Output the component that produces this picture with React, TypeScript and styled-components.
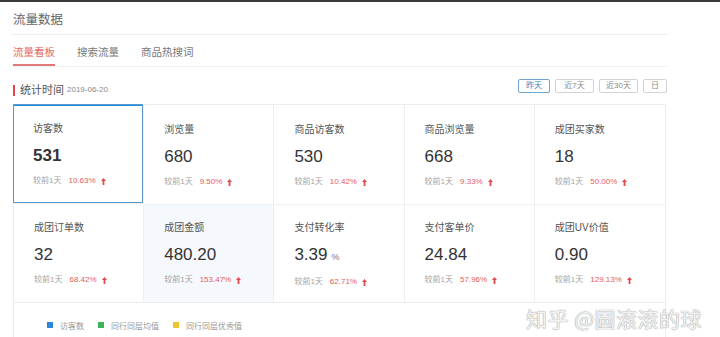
import React from "react";
import styled, { createGlobalStyle } from "styled-components";

const Global = createGlobalStyle`
  html, body { margin: 0; padding: 0; background: #fff; }
  body { font-family: "Liberation Sans", "Noto Sans CJK SC", sans-serif; color: #333; }
  * { box-sizing: border-box; }
`;

const Page = styled.div`
  position: relative;
  width: 720px;
  height: 337px;
  overflow: hidden;
  background: #fff;
`;

const TopBar = styled.div`
  height: 2px;
  background: #3b3b3b;
`;

const Main = styled.div`
  width: 667px;
  padding-left: 12px;
`;

const Header = styled.div`
  height: 33px;
  display: flex;
  align-items: center;
  padding-left: 1px;
  border-bottom: 1px solid #ececec;
  font-size: 12.5px;
  color: #666;
`;

const Tabs = styled.div`
  display: flex;
  gap: 22px;
  padding-left: 1px;
  border-bottom: 1px solid #f0f0f0;
`;

const Tab = styled.div<{ $active?: boolean }>`
  padding: 10px 0 5px;
  line-height: 14px;
  font-size: 10.5px;
  color: ${(p) => (p.$active ? "#e26a6a" : "#777")};
  border-bottom: 2px solid ${(p) => (p.$active ? "#e07a7a" : "transparent")};
`;

const StatHead = styled.div`
  height: 37px;
  display: flex;
  justify-content: space-between;
  align-items: flex-start;
  padding-top: 12px;
`;

const StatTitle = styled.div`
  margin-top: 4px;
  display: flex;
  align-items: center;
  line-height: 14px;
  padding-left: 1px;
`;

const RedMark = styled.span`
  width: 2px;
  height: 11px;
  background: #e04848;
  margin-right: 5px;
`;

const StatLabel = styled.span`
  font-size: 11px;
  color: #555;
`;

const StatDate = styled.span`
  font-size: 8px;
  color: #888;
  margin-left: 3px;
`;

const Ranges = styled.div`
  display: flex;
  gap: 5px;
`;

const RangeBtn = styled.div<{ $active?: boolean; $w: number }>`
  width: ${(p) => p.$w}px;
  height: 14px;
  border: 1px solid ${(p) => (p.$active ? "#6ea4cf" : "#d3d3d3")};
  border-radius: 2px;
  font-size: 8px;
  line-height: 12px;
  text-align: center;
  color: ${(p) => (p.$active ? "#3d7fb8" : "#888")};
  background: #fff;
`;

const Board = styled.div`
  margin-left: 1px;
  width: 653px;
  border: 1px solid #ececec;
  border-bottom: none;
`;

const Grid = styled.div`
  display: grid;
  grid-template-columns: repeat(5, 1fr);
  border-bottom: 1px solid #ececec;
`;

const Cell = styled.div<{ $active?: boolean; $tint?: boolean; $last?: boolean; $bottom?: boolean }>`
  height: ${(p) => (p.$bottom ? 97 : 100)}px;
  padding: ${(p) => (p.$bottom ? "16px" : "18px")} 20px 0;
  border-right: ${(p) => (p.$last ? "none" : "1px solid #efefef")};
  border-bottom: ${(p) => (p.$bottom ? "none" : "1px solid #efefef")};
  background: ${(p) => (p.$tint ? "#f5f9fd" : "#fff")};
  box-shadow: ${(p) =>
    p.$active ? "inset 0 0 0 1px #5c98c8, inset 0 2px 0 #1a8fe3" : "none"};
  margin: ${(p) => (p.$active ? "-1px 0 0 -1px" : "0")};
`;

const Label = styled.div`
  font-size: 10px;
  line-height: 14px;
  color: #555;
`;

const Value = styled.div<{ $bold?: boolean }>`
  margin-top: 8px;
  font-size: 17px;
  line-height: 24px;
  font-weight: ${(p) => (p.$bold ? 700 : 400)};
  color: #333;
`;

const Unit = styled.span`
  font-size: 9px;
  margin-left: 4px;
  color: #777;
`;

const Compare = styled.div`
  margin-top: 7px;
  display: flex;
  align-items: center;
  line-height: 12px;
  font-size: 8px;
`;

const CmpLabel = styled.span`
  color: #a3a3a3;
`;

const CmpPct = styled.span`
  color: #e45b5b;
  margin-left: 7px;
`;

const ArrowIcon = styled.svg`
  margin-left: 5px;
  width: 5px;
  height: 7px;
`;

const Legend = styled.div`
  height: 40px;
  display: flex;
  align-items: center;
  padding: 4px 0 0 33px;
  gap: 14px;
`;

const LegendItem = styled.div`
  display: flex;
  align-items: center;
  font-size: 8px;
  color: #999;
`;

const Swatch = styled.span<{ $c: string }>`
  width: 6px;
  height: 6px;
  background: ${(p) => p.$c};
  margin-right: 7px;
`;

const Watermark = styled.div`
  position: absolute;
  left: 526px;
  top: 303px;
  font-family: "Noto Sans CJK SC", sans-serif;
  font-size: 21px;
  line-height: 30px;
  color: #f2f2f2;
  text-shadow: 0 0 1px #a0a0a0, 0 0 1px #a0a0a0;
  letter-spacing: 0.5px;
  white-space: nowrap;
`;

const Arrow = () => (
  <ArrowIcon viewBox="0 0 5 7">
    <polygon points="2.5,0 5,3 0,3" fill="#e04a4a" />
    <rect x="1.6" y="3" width="1.8" height="4" fill="#e04a4a" />
  </ArrowIcon>
);

type Stat = { label: string; value: string; pct: string; unit?: string };

const row1: Stat[] = [
  { label: "访客数", value: "531", pct: "10.63%" },
  { label: "浏览量", value: "680", pct: "9.50%" },
  { label: "商品访客数", value: "530", pct: "10.42%" },
  { label: "商品浏览量", value: "668", pct: "9.33%" },
  { label: "成团买家数", value: "18", pct: "50.00%" },
];

const row2: Stat[] = [
  { label: "成团订单数", value: "32", pct: "68.42%" },
  { label: "成团金额", value: "480.20", pct: "153.47%" },
  { label: "支付转化率", value: "3.39", pct: "62.71%", unit: "%" },
  { label: "支付客单价", value: "24.84", pct: "57.96%" },
  { label: "成团UV价值", value: "0.90", pct: "129.13%" },
];

const StatCell = ({
  s,
  active,
  tint,
  last,
  bottom,
}: {
  s: Stat;
  active?: boolean;
  tint?: boolean;
  last?: boolean;
  bottom?: boolean;
}) => (
  <Cell $active={active} $tint={tint} $last={last} $bottom={bottom}>
    <Label>{s.label}</Label>
    <Value $bold={active}>
      {s.value}
      {s.unit && <Unit>{s.unit}</Unit>}
    </Value>
    <Compare>
      <CmpLabel>较前1天</CmpLabel>
      <CmpPct>{s.pct}</CmpPct>
      <Arrow />
    </Compare>
  </Cell>
);

export default function App() {
  return (
    <Page>
      <Global />
      <TopBar />
      <Main>
        <Header>流量数据</Header>
        <Tabs>
          <Tab $active>流量看板</Tab>
          <Tab>搜索流量</Tab>
          <Tab>商品热搜词</Tab>
        </Tabs>
        <StatHead>
          <StatTitle>
            <RedMark />
            <StatLabel>统计时间</StatLabel>
            <StatDate>2019-06-20</StatDate>
          </StatTitle>
          <Ranges>
            <RangeBtn $active $w={32}>昨天</RangeBtn>
            <RangeBtn $w={39}>近7天</RangeBtn>
            <RangeBtn $w={39}>近30天</RangeBtn>
            <RangeBtn $w={24}>日</RangeBtn>
          </Ranges>
        </StatHead>
        <Board>
          <Grid>
            {row1.map((s, i) => (
              <StatCell key={s.label} s={s} active={i === 0} last={i === 4} />
            ))}
            {row2.map((s, i) => (
              <StatCell key={s.label} s={s} tint={i === 1} last={i === 4} bottom />
            ))}
          </Grid>
          <Legend>
            <LegendItem>
              <Swatch $c="#2a86d8" />
              访客数
            </LegendItem>
            <LegendItem>
              <Swatch $c="#3bb55c" />
              同行同层均值
            </LegendItem>
            <LegendItem>
              <Swatch $c="#f2c230" />
              同行同层优秀值
            </LegendItem>
          </Legend>
        </Board>
      </Main>
      <Watermark>知乎 @圆滚滚的球</Watermark>
    </Page>
  );
}
